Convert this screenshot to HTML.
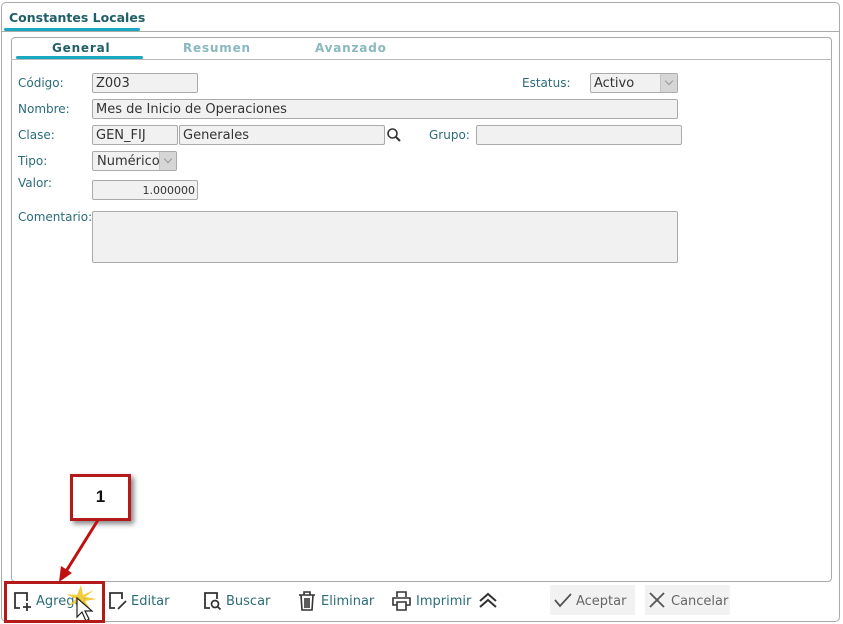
<!DOCTYPE html>
<html><head><meta charset="utf-8"><style>
*{box-sizing:border-box;margin:0;padding:0}
body{width:843px;height:624px;background:#fff;font-family:"DejaVu Sans","Liberation Sans",sans-serif;font-size:12px;color:#333;position:relative;overflow:hidden}
.a{position:absolute}
.lbl{position:absolute;color:#2b6c78;font-size:12px}
.inp{position:absolute;background:#f1f1f1;border:1px solid #aaa;border-radius:2px;height:20px;font-size:13px;color:#333;padding-left:3px;line-height:20px;font-family:"DejaVu Sans",sans-serif}
.sel .arr{position:absolute;right:0;top:0;width:17px;height:18px;background:#d6d6d6;border-left:1px solid #c4c4c4}
.sel .arr:after{content:"";position:absolute;left:5px;top:4px;width:5px;height:5px;border-right:1px solid #999;border-bottom:1px solid #999;transform:rotate(45deg)}
.btn{position:absolute;top:588px;height:28px;font-size:13px;color:#2b6c78;line-height:28px}
</style></head><body>
<div class="a" style="left:1px;top:2px;width:839px;height:620px;border:1px solid #aaa;border-radius:5px"></div>
<div class="a" style="left:1px;top:31px;width:839px;border-top:1px solid #aaa"></div>
<div class="a" style="left:9px;top:10px;font-weight:bold;color:#1f5f68;font-size:12.5px">Constantes Locales</div>
<div class="a" style="left:4px;top:28px;width:136px;height:3px;background:#1aa7c0;border-radius:2px"></div>
<div class="a" style="left:11px;top:37px;width:821px;height:545px;border:1px solid #aaa;border-radius:4px"></div>
<div class="a" style="left:11px;top:59px;width:821px;border-top:1px solid #bbb"></div>
<div class="a" style="left:52px;top:41px;font-weight:bold;color:#1f5f68;letter-spacing:.8px">General</div>
<div class="a" style="left:183px;top:41px;font-weight:bold;color:#8ab8bf;letter-spacing:.8px">Resumen</div>
<div class="a" style="left:315px;top:41px;font-weight:bold;color:#8ab8bf;letter-spacing:.8px">Avanzado</div>
<div class="a" style="left:16px;top:56px;width:127px;height:3px;background:#1aa7c0;border-radius:2px"></div>

<div class="lbl" style="left:18px;top:76px">Código:</div>
<div class="inp" style="left:92px;top:73px;width:106px">Z003</div>
<div class="lbl" style="left:522px;top:76px">Estatus:</div>
<div class="inp sel" style="left:590px;top:73px;width:88px">Activo<div class="arr"></div></div>
<div class="lbl" style="left:18px;top:102px">Nombre:</div>
<div class="inp" style="left:92px;top:99px;width:586px">Mes de Inicio de Operaciones</div>
<div class="lbl" style="left:18px;top:128px">Clase:</div>
<div class="inp" style="left:92px;top:125px;width:86px">GEN_FIJ</div>
<div class="inp" style="left:179px;top:125px;width:206px">Generales</div>
<svg class="a" style="left:386px;top:127px" width="16" height="16"><circle cx="6.5" cy="6.5" r="4.5" fill="none" stroke="#333" stroke-width="1.6"/><line x1="10" y1="10" x2="14" y2="14" stroke="#333" stroke-width="2"/></svg>
<div class="lbl" style="left:429px;top:128px">Grupo:</div>
<div class="inp" style="left:476px;top:125px;width:206px"></div>
<div class="lbl" style="left:18px;top:154px">Tipo:</div>
<div class="inp sel" style="left:92px;top:151px;width:85px;padding-left:4px">Numérico<div class="arr"></div></div>
<div class="lbl" style="left:18px;top:176px">Valor:</div>
<div class="inp" style="left:92px;top:180px;width:106px;text-align:right;padding-right:2px;font-size:11px">1.000000</div>
<div class="lbl" style="left:18px;top:210px">Comentario:</div>
<div class="inp" style="left:92px;top:211px;width:586px;height:52px"></div>

<div class="a" style="left:70px;top:474px;width:61px;height:47px;border:3px solid #b51a1a;background:#fff;box-shadow:3px 3px 5px #888;text-align:center;font:bold 17px 'Liberation Sans',sans-serif;line-height:40px;color:#111">1</div>
<svg class="a" style="left:55px;top:518px" width="50" height="66"><line x1="43" y1="2" x2="10" y2="55" stroke="#c01010" stroke-width="3"/><polygon points="4,64 6,48 17,55" fill="#c01010"/></svg>

<div class="a" style="left:550px;top:585px;width:85px;height:30px;background:#f2f2f2"></div>
<div class="a" style="left:645px;top:585px;width:85px;height:30px;background:#f2f2f2"></div>

<svg class="a" style="left:12px;top:590px" width="22" height="22"><path d="M8 18H3V3h12v8" fill="none" stroke="#333" stroke-width="1.8"/><path d="M15 13v8M11 17h8" stroke="#333" stroke-width="1.8"/></svg>
<div class="btn" style="left:36px">Agregar</div>
<svg class="a" style="left:64px;top:584px" width="34" height="28"><path d="M17 1L19 11 30 6 21 13 33 15 21 17 27 26 18 19 14 27 14 18 4 22 12 15 2 10 13 11Z" fill="#f3c72a" opacity=".9"/></svg>
<svg class="a" style="left:76px;top:597px" width="18" height="26"><path d="M1 1V20L6 15 10 24 13 22 9 14H16Z" fill="#fff" stroke="#222" stroke-width="1.2"/></svg>
<div class="a" style="left:4px;top:581px;width:101px;height:42px;border:3px solid #b51a1a"></div>

<svg class="a" style="left:107px;top:590px" width="22" height="22"><path d="M8 18H3V3h12v6" fill="none" stroke="#333" stroke-width="1.8"/><path d="M11 19l8-8" stroke="#333" stroke-width="1.8"/></svg>
<div class="btn" style="left:131px">Editar</div>
<svg class="a" style="left:202px;top:590px" width="22" height="22"><path d="M8 18H3V3h12v6" fill="none" stroke="#333" stroke-width="1.8"/><circle cx="13" cy="14" r="3.5" fill="none" stroke="#333" stroke-width="1.7"/><path d="M15.5 16.5l3 3" stroke="#333" stroke-width="1.8"/></svg>
<div class="btn" style="left:226px">Buscar</div>
<svg class="a" style="left:297px;top:590px" width="22" height="22"><path d="M2 5h16M7 5V2h6v3M4 5l1 15h10l1-15M8 8v10M10 8v10M12 8v10" fill="none" stroke="#333" stroke-width="1.6"/></svg>
<div class="btn" style="left:321px">Eliminar</div>
<svg class="a" style="left:391px;top:590px" width="22" height="22"><path d="M6 7V2h9v5M6 15H2V8h17v7h-4M6 12h9v8H6z" fill="none" stroke="#333" stroke-width="1.6"/></svg>
<div class="btn" style="left:416px">Imprimir</div>
<svg class="a" style="left:478px;top:591px" width="20" height="18"><path d="M2 10l8-7 8 7M2 16l8-7 8 7" fill="none" stroke="#333" stroke-width="2"/></svg>
<svg class="a" style="left:553px;top:591px" width="20" height="18"><path d="M2 9l5 6L18 3" fill="none" stroke="#555" stroke-width="1.8"/></svg>
<div class="btn" style="left:576px;color:#666">Aceptar</div>
<svg class="a" style="left:648px;top:591px" width="18" height="18"><path d="M2 2l14 14M16 2L2 16" stroke="#555" stroke-width="1.8"/></svg>
<div class="btn" style="left:671px;color:#666">Cancelar</div>
</body></html>
